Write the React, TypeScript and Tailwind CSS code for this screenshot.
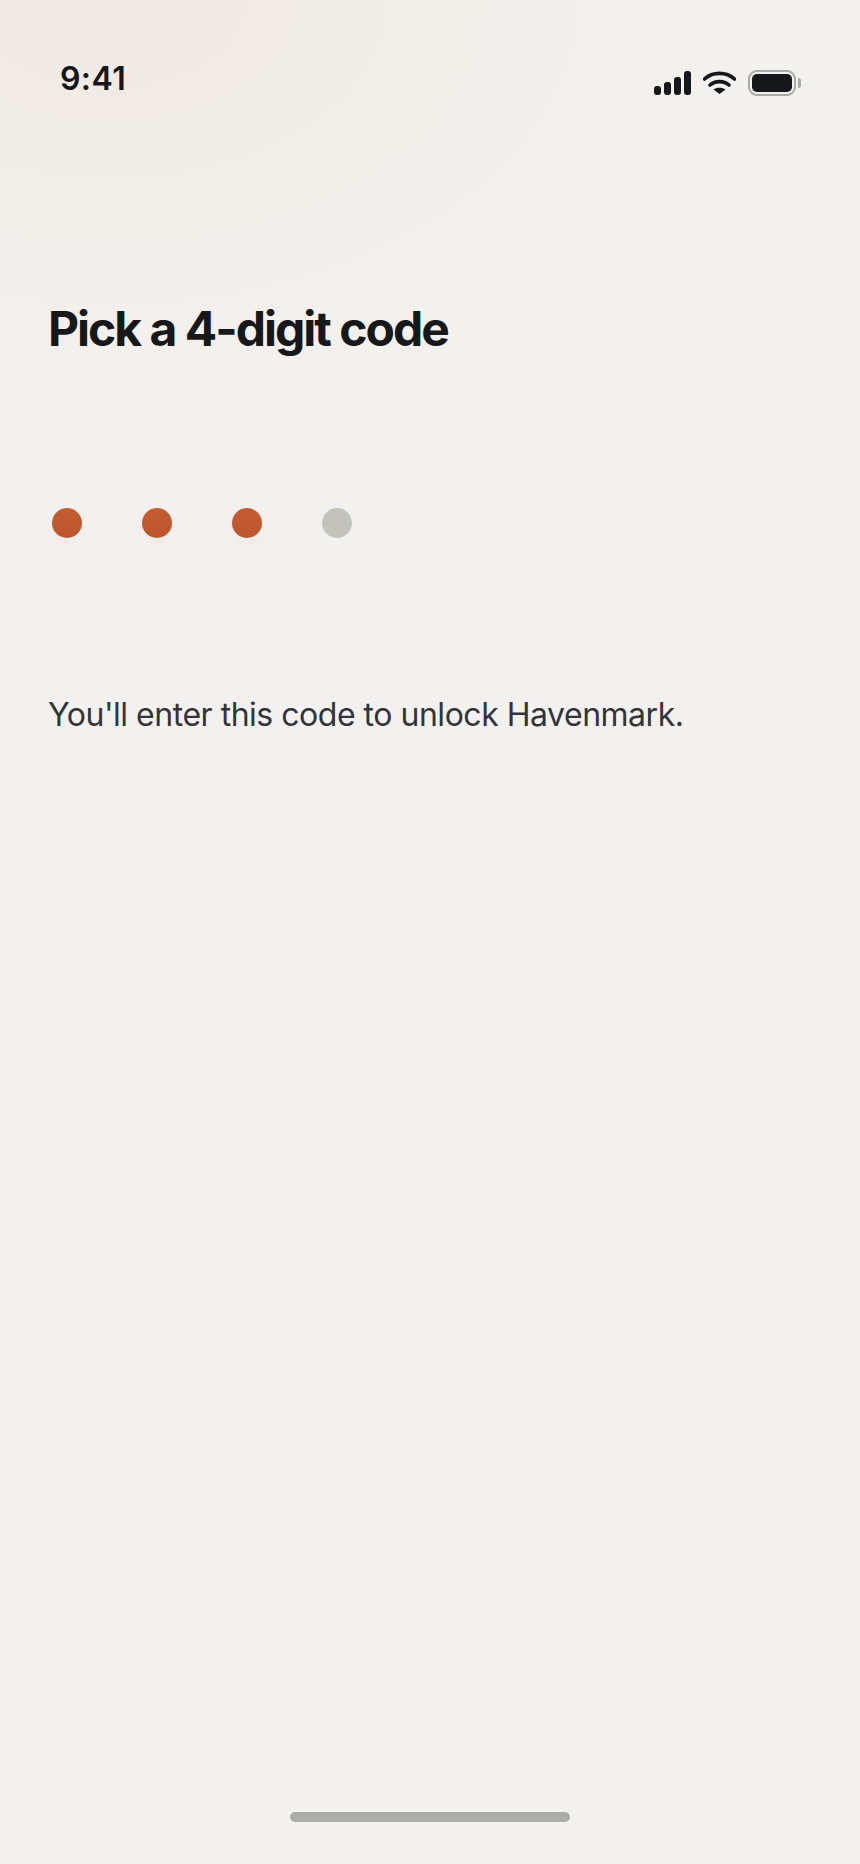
const dots = [true, true, true, false]

function StatusIcons() {
  return (
    <div className="flex items-center gap-[12px]">
      <svg width="37" height="24" viewBox="0 0 37 24" className="text-[#15171a]">
        <rect x="0" y="15" width="7" height="9" rx="3" fill="currentColor" />
        <rect x="10" y="11" width="7" height="13" rx="3" fill="currentColor" />
        <rect x="20" y="6" width="7" height="18" rx="3" fill="currentColor" />
        <rect x="30" y="0" width="7" height="24" rx="3" fill="currentColor" />
      </svg>
      <svg width="33" height="24" viewBox="0 0 33 24" fill="none" className="text-[#15171a]">
        <path d="M1.500 8C9.500 0.500 23.500 0.500 31.500 8" stroke="currentColor" strokeWidth="3.600" strokeLinecap="round" />
        <path d="M7 14C12 9.500 21 9.500 26 14" stroke="currentColor" strokeWidth="3.600" strokeLinecap="round" />
        <path d="M10.500 18.500C13.500 16 19.500 16 22.500 18.500L16.500 23Z" fill="currentColor" />
      </svg>
      <div className="relative h-[26px] w-[48px] rounded-[9px] border-[2.5px] border-[#a9a9a7] p-[2px]">
        <div className="h-full w-full rounded-[5px] bg-[#15171a]" />
        <div className="absolute right-[-7px] top-[5.500px] h-[10px] w-[3px] rounded-r-full bg-[#a9a9a7]" />
      </div>
    </div>
  )
}

export default function App() {
  return (
    <div className="relative flex h-[1864px] w-[860px] flex-col overflow-hidden bg-[radial-gradient(ellipse_680px_440px_at_110px_0px,#efe9e3_0%,#f2eeea_55%,#f3f1ef_100%)] font-['Inter',sans-serif]">
      <div className="flex items-start justify-between pl-[60px] pr-[64px] pt-[59px]">
        <span className="text-[32px] font-semibold leading-[40px] tracking-[0.4px] text-[#15171a]">9:41</span>
        <div className="pt-[11px]">
          <StatusIcons />
        </div>
      </div>

      <h1 className="ml-[48px] mt-[200px] text-[48px] font-[750] leading-[60px] tracking-[-2px] text-[#17181a]">
        Pick a 4-digit code
      </h1>

      <div className="ml-[52px] mt-[149px] flex gap-[60px]">
        {dots.map((filled, i) => (
          <div
            key={i}
            className={
              filled
                ? 'h-[30px] w-[30px] rounded-full bg-gradient-to-b from-[#c45c33] to-[#bd552c] shadow-[0_8px_14px_rgba(193,88,47,0.04)]'
                : 'h-[30px] w-[30px] rounded-full bg-[#c3c3bc]'
            }
          />
        ))}
      </div>

      <p className="ml-[48px] mt-[155px] text-[32px] font-normal leading-[44px] tracking-[-0.48px] text-[#33343a]">
        You'll enter this code to unlock Havenmark.
      </p>

      <div className="mt-auto mb-[42px] h-[10px] w-[280px] self-center rounded-full bg-[#acaca8]" />
    </div>
  )
}
